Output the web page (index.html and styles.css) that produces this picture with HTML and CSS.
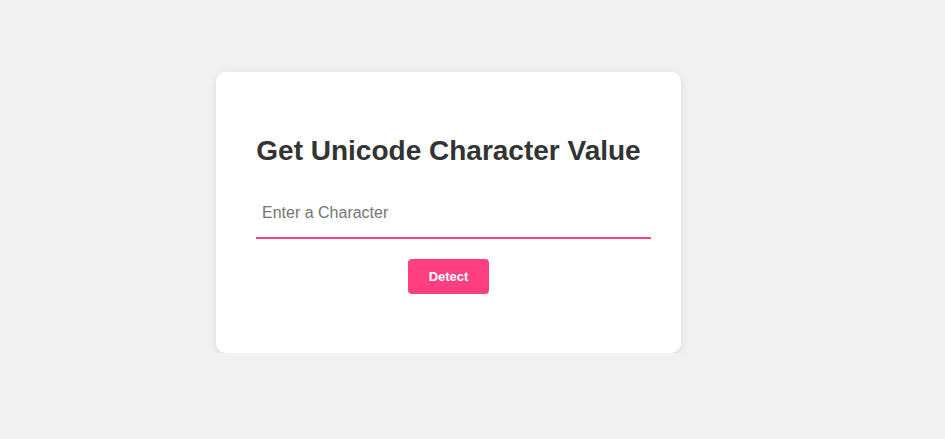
FILE: index.html
```html
<!DOCTYPE html>
<html lang="en">
<head>
<meta charset="utf-8">
<title>Get Unicode Character Value</title>
<link rel="stylesheet" href="styles.css">
</head>
<body>
<div class="page">
  <div class="card">
    <h1 class="title">Get Unicode Character Value</h1>
    <input class="char-input" type="text" placeholder="Enter a Character">
    <div class="actions">
      <button class="detect-btn" type="button">Detect</button>
    </div>
  </div>
</div>
</body>
</html>
```

FILE: styles.css
```css
* { box-sizing: border-box; }
html, body {
  margin: 0;
  padding: 0;
  background: #f1f1f1;
  font-family: "Liberation Sans", Arial, sans-serif;
}
.page {
  padding: 72px 0 0 216px;
}
.card {
  width: 465px;
  height: 281px;
  background: #ffffff;
  border-radius: 10px;
  box-shadow: 0 2px 10px rgba(0, 0, 0, 0.1);
  padding: 40px;
}
.title {
  margin: 23px 0 22px;
  font-size: 28px;
  font-weight: bold;
  line-height: 32px;
  color: #333333;
  text-align: center;
}
.char-input {
  display: block;
  width: 395px;
  height: 50px;
  padding: 0 6px;
  border: none;
  border-bottom: 2px solid #ff3f7f;
  outline: none;
  font-family: "Liberation Sans", Arial, sans-serif;
  font-size: 16px;
  color: #333333;
  background: transparent;
}
.char-input::placeholder {
  color: #757575;
}
.actions {
  display: flex;
  justify-content: center;
  margin-top: 20px;
}
.detect-btn {
  height: 35px;
  width: 81px;
  border: none;
  border-radius: 4px;
  background: #ff3f7f;
  color: #ffffff;
  font-family: "Liberation Sans", Arial, sans-serif;
  font-size: 13px;
  font-weight: bold;
  cursor: pointer;
}
```
